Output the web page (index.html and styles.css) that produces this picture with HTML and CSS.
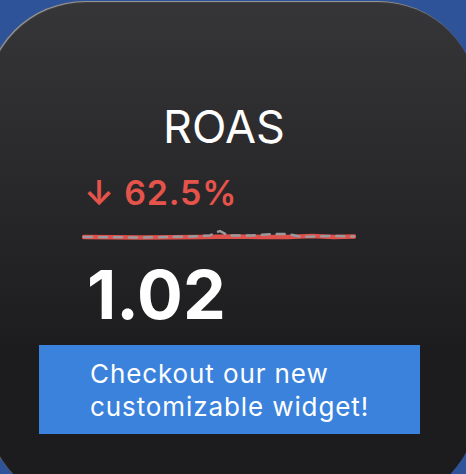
FILE: index.html
```html
<!DOCTYPE html>
<html lang="en">
<head>
  <meta charset="UTF-8" />
  <meta name="viewport" content="width=device-width, initial-scale=1.0"/>
  <title>ROAS Widget</title>
  <link rel="stylesheet" href="styles.css">
</head>
<body>

  <div id="tela">
    <div id="widget">
      <div class="metrica">
        <h1 class="titulo">ROAS</h1>
        <div class="variacao"><span class="seta">↓</span> 62.5%</div>
        <svg class="grafico" width="274" height="14" viewBox="0 0 274 14">
          <polyline class="linha" points="2,8 60,8.5 120,8 150,7.5 180,8 206,8 230,7 252,8 272,7.5" />
          <polyline class="tracejado" points="2,8 60,8.5 110,7.5 128,6.5 133,3.5 138,2 146,6.5 170,6.5 190,5 206,5 220,8 250,7 272,7.5" />
        </svg>
        <div class="valor">1.02</div>
      </div>
      <button id="aviso">Checkout our new customizable widget!</button>
    </div>
  </div>

</body>
</html>
```

FILE: styles.css
```css
body {
  margin: 0;
  background-color: #2f5399;
  font-family: Inter, "Noto Sans", Arial, sans-serif;
  overflow: hidden;
}

#tela {
  width: 466px;
  height: 474px;
  overflow: hidden;
}

#widget {
  width: 493px;
  height: 504px;
  margin: 1px 0 0 -15px;
  box-sizing: border-box;
  padding: 100px 0 0 54px;
  border-radius: 100px;
  background: linear-gradient(to bottom, #363638, #1c1c1e 70%);
  box-shadow: inset 1px 1px 1px rgba(200, 200, 205, 0.7);
}

.metrica {
  padding-left: 48px;
}

.titulo {
  margin: 0;
  width: 274px;
  font-size: 45px;
  line-height: 52px;
  font-weight: 400;
  color: #ffffff;
  text-align: center;
}

.variacao {
  margin: 21px 0 0 -3px;
  font-size: 34px;
  line-height: 38px;
  font-weight: 600;
  color: #e5534b;
  letter-spacing: 0.8px;
}

.grafico {
  display: block;
  margin: 17px 0 0 -5px;
}

.linha {
  fill: none;
  stroke: #e0504a;
  stroke-width: 4.5;
  stroke-linecap: round;
  stroke-linejoin: round;
}

.tracejado {
  fill: none;
  stroke: #9a9a9e;
  stroke-width: 2.5;
  stroke-dasharray: 8 7;
  stroke-linecap: round;
}

.valor {
  margin-top: 15px;
  font-size: 68px;
  line-height: 72px;
  font-weight: 700;
  color: #ffffff;
}

#aviso {
  display: block;
  width: 381px;
  margin-top: 15px;
  padding: 12px 30px 11px 51px;
  border: none;
  border-radius: 0;
  background-color: #3b82dc;
  color: #ffffff;
  font-family: inherit;
  font-size: 26px;
  line-height: 33px;
  font-weight: 400;
  letter-spacing: 0.9px;
  text-align: left;
  box-sizing: border-box;
}
```
